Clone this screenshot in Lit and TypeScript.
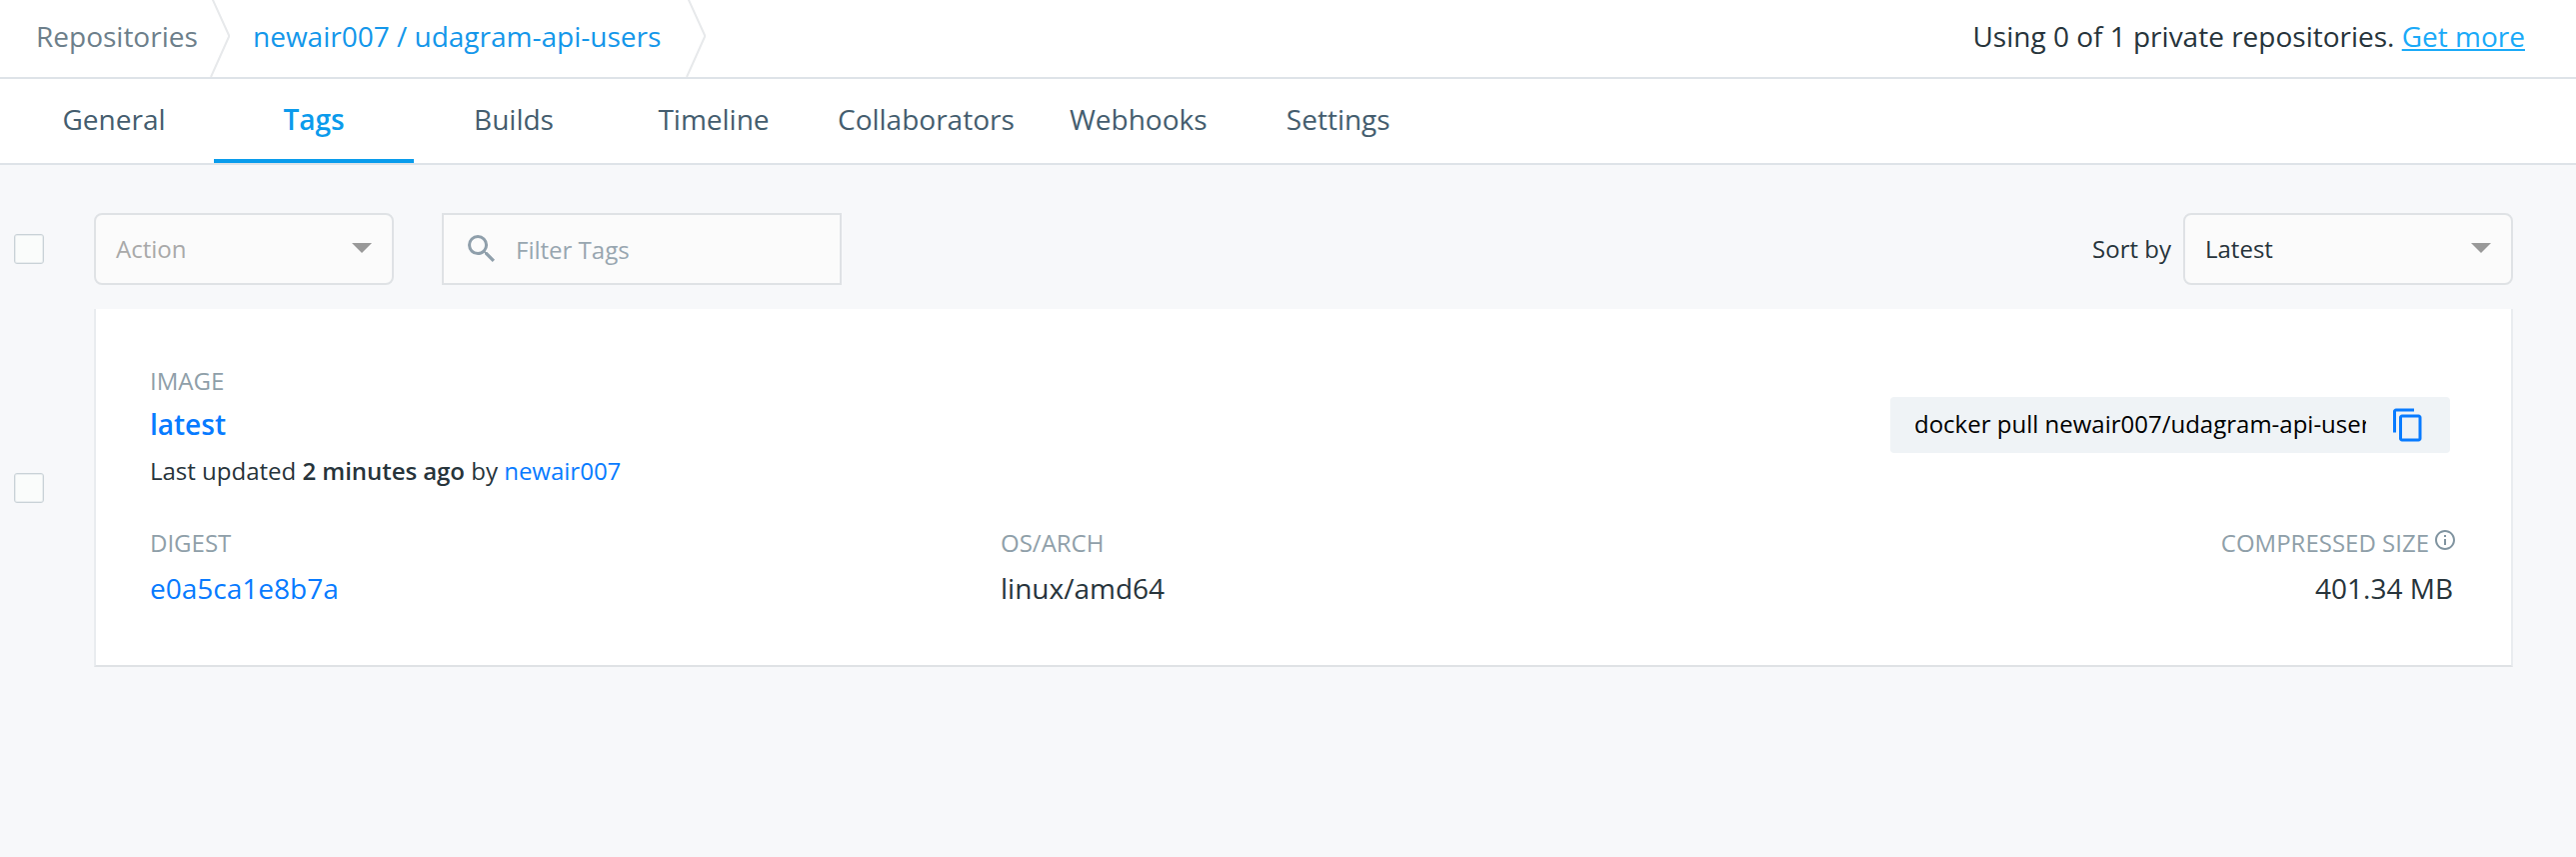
import { LitElement, html, css } from "lit";
import { customElement, state } from "lit/decorators.js";

@customElement("hub-breadcrumb")
class HubBreadcrumb extends LitElement {
  static styles = css`
    :host { display: flex; justify-content: space-between; height: 77px; background: #fff; border-bottom: 2px solid #dee3e8; font-size: 28px; line-height: 72px; }
    .trail { display: flex; }
    .first { padding-left: 36px; width: 174px; color: #6d7f8b; }
    .repo { padding-left: 23px; width: 433px; color: #1497ea; }
    svg { width: 20px; height: 77px; flex: none; fill: none; stroke: #e7e9eb; stroke-width: 2; }
    .quota { padding-right: 51px; color: #27343b; }
    .more { color: #1aaaf8; text-decoration: underline; text-decoration-thickness: 2px; text-underline-offset: 2px; text-decoration-skip-ink: none; }
  `;
  render() {
    const chevron = html`<svg viewBox="0 0 20 77"><path d="M2.5 -1L19.300 36L1 77"/></svg>`;
    return html`
      <div class="trail"><span class="first">Repositories</span>${chevron}<span class="repo">newair007 / udagram-api-users</span>${chevron}</div>
      <div class="quota">Using 0 of 1 private repositories. <a class="more">Get more</a></div>`;
  }
}

@customElement("hub-tabs")
class HubTabs extends LitElement {
  static styles = css`
    :host { display: flex; height: 84px; padding-left: 14px; background: #fff; border-bottom: 2px solid #dee3e8; font-size: 28px; line-height: 80px; }
    .tab { box-sizing: border-box; height: 84px; min-width: 200px; padding: 0 24px; text-align: center; color: #445d6e; border-bottom: 4px solid transparent; cursor: pointer; }
    .active { color: #0b9bec; border-color: #099cec; font-weight: 600; }
  `;
  @state() active = "Tags";
  render() {
    return ["General", "Tags", "Builds", "Timeline", "Collaborators", "Webhooks", "Settings"].map(
      (t) => html`<div class="tab ${t === this.active ? "active" : ""}" @click=${() => (this.active = t)}>${t}</div>`
    );
  }
}

const box = css`
  .check { box-sizing: border-box; width: 30px; height: 30px; flex: none; border: 1px solid #c9d2d7; border-radius: 3px; background: #fafcfb; box-shadow: inset 0 0 0 1px #e9edef; }
`;

@customElement("hub-toolbar")
class HubToolbar extends LitElement {
  static styles = [box, css`
    :host { display: flex; align-items: center; height: 72px; font-size: 24px; line-height: 33px; }
    .select, .filter { box-sizing: border-box; display: flex; align-items: center; height: 72px; border: 2px solid #dfe2e5; background: #fbfbfb; }
    .select { justify-content: space-between; border-radius: 8px; padding: 0 20px; }
    .text { padding-bottom: 1px; }
    .action { width: 300px; margin-left: 50px; color: #a9a9a9; }
    .latest { width: 330px; margin-left: 12px; color: #27343b; }
    .filter { width: 400px; margin-left: 48px; padding: 2px 0 0 24px; color: #98a6b0; }
    .glass { width: 27px; height: 27px; margin: -3px 21px 0 0; fill: #8f9fab; }
    .arrow { width: 20px; height: 10px; margin-top: -2px; fill: #999; }
    .sort { margin-left: auto; color: #27343b; }
  `];
  render() {
    const arrow = html`<svg class="arrow" viewBox="0 0 20 10"><path d="M0 0H20L10 10Z"/></svg>`;
    return html`
      <span class="check"></span>
      <div class="select action"><span class="text">Action</span>${arrow}</div>
      <div class="filter">
        <svg class="glass" viewBox="3 3 17.49 17.49"><path d="M15.5 14h-.79l-.28-.27A6.471 6.471 0 0 0 16 9.5 6.5 6.5 0 1 0 9.5 16c1.61 0 3.09-.59 4.23-1.57l.27.28v.79l5 4.99L20.49 19l-4.99-5zm-6 0C7.01 14 5 11.99 5 9.5S7.01 5 9.5 5 14 7.01 14 9.5 11.99 14 9.5 14z"/></svg>
        <span class="text">Filter Tags</span>
      </div>
      <span class="sort text">Sort by</span>
      <div class="select latest"><span class="text">Latest</span>${arrow}</div>`;
  }
}

@customElement("hub-tag-row")
class HubTagRow extends LitElement {
  static styles = [box, css`
    :host { display: flex; align-items: center; gap: 50px; }
    .card { box-sizing: border-box; flex: 1; height: 358px; background: #fff; border: 2px solid #e9ecef; border-top: 0; border-bottom-color: #dfe2e5; padding: 55px 61px 0 54px; }
    .row { display: flex; justify-content: space-between; }
    .label { font-size: 24px; line-height: 33px; color: #8f9fa9; }
    .name { font-size: 28px; line-height: 38px; margin-top: 8px; font-weight: 600; color: #087bff; }
    .updated { font-size: 24px; line-height: 33px; margin-top: 11px; color: #27343b; }
    .updated b { font-weight: 600; letter-spacing: -0.05px; }
    .pull { box-sizing: border-box; display: flex; align-items: center; width: 560px; height: 56px; margin-top: 33px; padding-left: 24px; background: #eff3f6; border-radius: 4px; font-size: 24px; line-height: 33px; color: #000; }
    .command { width: 452px; padding-bottom: 3px; overflow: hidden; white-space: nowrap; }
    .copy { width: 36px; height: 36px; margin-left: 24px; fill: #087bff; }
    .details { display: grid; grid-template-columns: 851px 1fr auto; margin-top: 39px; }
    .value { font-size: 28px; line-height: 38px; margin-top: 10px; color: #27343b; }
    .link { color: #087bff; }
    .size { text-align: right; margin-right: -5px; }
    .size .label { display: flex; }
    .size .value { padding-right: 2px; }
    .info { width: 20px; height: 20px; margin: 4px 0 0 6px; fill: #8094a0; }
  `];
  render() {
    return html`
      <span class="check"></span>
      <div class="card">
        <div class="row">
          <div>
            <div class="label">IMAGE</div>
            <div class="name">latest</div>
            <div class="updated">Last updated <b>2 minutes ago</b> by <a class="link">newair007</a></div>
          </div>
          <div class="pull">
            <div class="command">docker pull newair007/udagram-api-users:latest</div>
            <svg class="copy" viewBox="0 0 24 24"><path d="M16 1H4c-1.100 0-2 .9-2 2v14h2V3h12V1zm3 4H8c-1.100 0-2 .9-2 2v14c0 1.100.9 2 2 2h11c1.100 0 2-.9 2-2V7c0-1.100-.9-2-2-2zm0 16H8V7h11v14z"/></svg>
          </div>
        </div>
        <div class="details">
          <div><div class="label">DIGEST</div><div class="value link">e0a5ca1e8b7a</div></div>
          <div><div class="label">OS/ARCH</div><div class="value">linux/amd64</div></div>
          <div class="size">
            <div class="label">COMPRESSED SIZE<svg class="info" viewBox="2 2 20 20"><path d="M11 7h2v2h-2zm0 4h2v6h-2zm1-9C6.480 2 2 6.480 2 12s4.480 10 10 10 10-4.480 10-10S17.520 2 12 2zm0 18c-4.410 0-8-3.590-8-8s3.590-8 8-8 8 3.590 8 8-3.590 8-8 8z"/></svg></div>
            <div class="value">401.34 MB</div>
          </div>
        </div>
      </div>`;
  }
}

@customElement("app-root")
class AppRoot extends LitElement {
  static styles = css`
    :host { display: block; height: 857px; overflow: hidden; background: #f7f8fa; font-family: "Open Sans", sans-serif; }
    .content { display: flex; flex-direction: column; gap: 24px; padding: 48px 63px 0 14px; }
  `;
  render() {
    return html`
      <hub-breadcrumb></hub-breadcrumb>
      <hub-tabs></hub-tabs>
      <div class="content"><hub-toolbar></hub-toolbar><hub-tag-row></hub-tag-row></div>`;
  }
}
